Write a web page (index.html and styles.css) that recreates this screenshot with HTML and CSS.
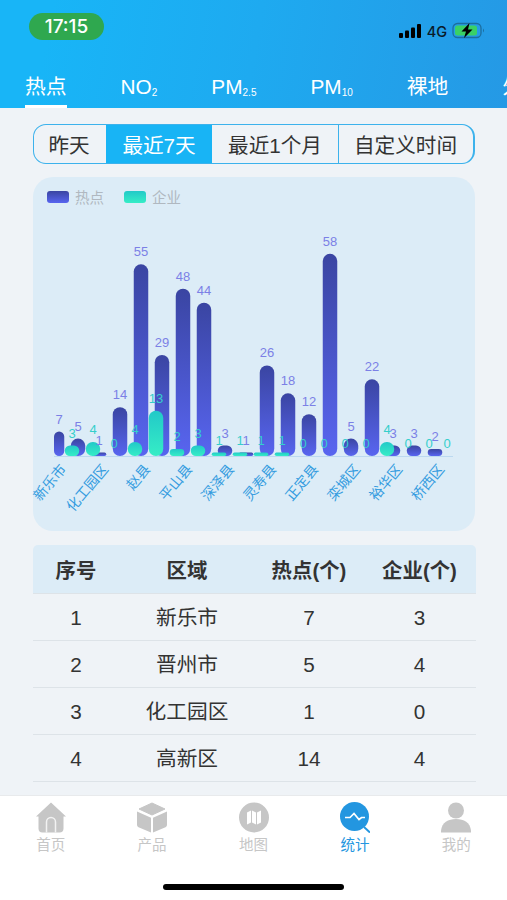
FILE: index.html
```html
<!DOCTYPE html>
<html lang="zh-CN">
<head>
    <meta charset="UTF-8">
    <meta name="viewport" content="width=device-width, initial-scale=1.0">
    <title>统计</title>
    <link rel="stylesheet" href="styles.css">
</head>
<body>
    <header class="header">
        <div class="status">
            <span class="time">17:15</span>
            <div class="status-right">
                <svg width="24" height="16" viewBox="0 0 24 16">
                    <rect x="1" y="10" width="4" height="5" rx="1"/>
                    <rect x="7" y="7.500" width="4" height="7.500" rx="1"/>
                    <rect x="13" y="4.500" width="4" height="10.500" rx="1"/>
                    <rect x="19" y="1" width="4" height="14" rx="1"/>
                </svg>
                <span class="net">4G</span>
                <svg width="34" height="18" viewBox="0 0 34 18">
                    <rect x="1" y="1.500" width="28" height="14" rx="4.500" fill="none" stroke="#1c6e9f" stroke-width="1.300"/>
                    <rect x="3" y="3.500" width="22" height="10" rx="2.500" fill="#3ad065"/>
                    <path d="M31 6.500v4q2-2 0-4z" fill="#1c6e9f"/>
                    <path d="M17.500 1L9.500 9.500h4.500L12 16l8.500-8.500H16z"/>
                </svg>
            </div>
        </div>
        <nav class="tabs">
            <a class="tab on">热点</a>
            <a class="tab">NO<small>2</small></a>
            <a class="tab">PM<small>2.5</small></a>
            <a class="tab">PM<small>10</small></a>
            <a class="tab">裸地</a>
            <a class="tab">外</a>
        </nav>
    </header>

    <main class="content">
        <div class="range">
            <span class="r1">昨天</span>
            <span class="r2 active">最近7天</span>
            <span class="r3">最近1个月</span>
            <span class="r4">自定义时间</span>
        </div>

        <div class="chart-box">
            <div class="legend">
                <i class="hot"></i><span>热点</span>
                <i class="firm"></i><span>企业</span>
            </div>
            <svg id="chart" width="442" height="318" viewBox="33 213 442 318">
                <defs>
                    <linearGradient id="blue" x1="0" y1="0" x2="0" y2="1">
                        <stop offset="0" stop-color="#3a45a2"/>
                        <stop offset="1" stop-color="#5865f0"/>
                    </linearGradient>
                    <linearGradient id="green" x1="0" y1="0" x2="0" y2="1">
                        <stop offset="0" stop-color="#22c9c8"/>
                        <stop offset="1" stop-color="#36edc6"/>
                    </linearGradient>
                </defs>
                <path d="M54 456.500H453" stroke="#bcd9f0"/>
                <g id="bars"></g>
                <g id="labels"></g>
            </svg>
        </div>

        <table class="list">
            <thead>
                <tr><th class="c1">序号</th><th class="c2">区域</th><th class="c3">热点(个)</th><th class="c4">企业(个)</th></tr>
            </thead>
            <tbody>
                <tr><td>1</td><td>新乐市</td><td>7</td><td>3</td></tr>
                <tr><td>2</td><td>晋州市</td><td>5</td><td>4</td></tr>
                <tr><td>3</td><td>化工园区</td><td>1</td><td>0</td></tr>
                <tr><td>4</td><td>高新区</td><td>14</td><td>4</td></tr>
            </tbody>
        </table>
    </main>

    <footer class="footer">
        <div class="menu">
            <a>
                <svg width="30" height="30" viewBox="0 0 30 30">
                    <path d="M15 0L0 14h2.500v12q0 4 4 4h17q4 0 4-4V14H30z"/>
                    <path d="M10.500 30V19.500a4.500 4.500 0 0 1 9 0V30" fill="none" stroke="#f2f2f2" stroke-width="1.500"/>
                </svg>
                <span>首页</span>
            </a>
            <a>
                <svg width="30" height="30" viewBox="0 0 30 30">
                    <path d="M15 0.500L28 6.500 15 12.500 2 6.500z" stroke="#c6c6c6" stroke-linejoin="round"/>
                    <path d="M0 9l14 6.200V30L1.500 24.800Q0 24 0 22.500zM30 9l-14 6.200V30l12.500-5.200Q30 24 30 22.500z"/>
                </svg>
                <span>产品</span>
            </a>
            <a>
                <svg width="30" height="30" viewBox="0 0 30 30">
                    <circle cx="15" cy="15" r="15"/>
                    <path d="M8 10l4-2v12l-4 2zM13 8l4 2v12l-4-2zM18 10l4-2v12l-4 2z" fill="#fff"/>
                </svg>
                <span>地图</span>
            </a>
            <a class="now">
                <svg width="30" height="31" viewBox="0 0 30 31">
                    <circle cx="14.500" cy="14.500" r="14.500"/>
                    <path d="M24 25l6 5.500" stroke="#2396e0" stroke-width="2"/>
                    <path d="M5 15.500h5l4-4 5 6 2.500-2H25" fill="none" stroke="#fff" stroke-width="1.700"/>
                </svg>
                <span>统计</span>
            </a>
            <a>
                <svg width="30" height="30" viewBox="0 0 30 30">
                    <circle cx="15" cy="8" r="8"/>
                    <path d="M0 30v-2C1 20 7 16.500 15 16.500S29 20 30 28v2z"/>
                </svg>
                <span>我的</span>
            </a>
        </div>
        <div class="home-bar"></div>
    </footer>

    <script src="chart.js"></script>
</body>
</html>
```

FILE: styles.css
```css
*{
    box-sizing: border-box;
}
body{
    margin: 0;
    height: 900px;
    display: flex;
    flex-direction: column;
    overflow: hidden;
    background-color: #fff;
    color: #333;
    font-family: "Liberation Sans", "Noto Sans CJK SC", sans-serif;
}
.header{
    height: 108px;
    flex: none;
    background: linear-gradient(100deg, #18b5f7 10%, #1eaaf0 50%, #2599e5);
    color: #fff;
}
.status{
    height: 66px;
    padding: 13px 21px 0 29px;
    display: flex;
    justify-content: space-between;
}
.time{
    width: 75px;
    height: 27px;
    border-radius: 14px;
    background-color: #2fa84f;
    font: 500 19px/28px Inter, sans-serif;
    text-align: center;
}
.status-right{
    display: flex;
    align-items: center;
    height: 36px;
    color: #0a1a28;
}
.net{
    margin: 1px 5px 0 5px;
    font: 500 14.500px Inter, sans-serif;
}
.tabs{
    display: flex;
    gap: 54px;
    height: 42px;
    padding-left: 25px;
    overflow: hidden;
    white-space: nowrap;
}
.tab{
    flex: none;
    font-size: 20.800px;
    line-height: 41px;
}
.tab small{
    font-size: 10px;
    position: relative;
    top: 2px;
}
.on{
    border-bottom: 3px solid #fff;
}
.content{
    height: 687px;
    flex: none;
    padding: 16px 31px 0 33px;
    background-color: #eff3f7;
    overflow: hidden;
}
.range{
    display: flex;
    width: 442px;
    height: 40px;
    border: 1.500px solid #3cb2ec;
    border-right-width: 2px;
    border-radius: 13px;
    overflow: hidden;
    font-size: 20.600px;
    line-height: 41px;
    text-align: center;
}
.r1{
    width: 72px;
    padding-right: 2px;
}
.r2{
    width: 106px;
}
.r3{
    width: 127px;
    border-right: 1.500px solid #3cb2ec;
}
.r4{
    flex: 1;
    padding-right: 1px;
}
.active{
    background-color: #18b4f5;
    color: #fff;
}
.chart-box{
    width: 442px;
    height: 354px;
    margin-top: 13px;
    border-radius: 20px;
    background-color: #dcecf7;
}
.chart-box svg{
    display: block;
    overflow: visible;
}
.legend{
    display: flex;
    align-items: center;
    height: 36px;
    padding: 3px 0 0 14px;
    font-size: 14.500px;
    color: #b0b8c0;
}
.legend i{
    width: 22px;
    height: 12px;
    margin-right: 6px;
    border-radius: 3px;
}
.legend span{
    width: 49px;
}
.hot{
    background: linear-gradient(#3a45a2, #5865f0);
}
.firm{
    background: linear-gradient(#22c9c8, #36edc6);
}
#labels{
    font-size: 13px;
}
.list{
    width: 443px;
    margin-top: 14px;
    border-collapse: separate;
    border-spacing: 0;
    table-layout: fixed;
    text-align: center;
    font-size: 20.700px;
}
.list th, .list td{
    height: 47px;
    padding: 2px 0 0;
    line-height: 30px;
    border-bottom: 1px solid #dde3e8;
}
.list th{
    height: 49px;
    padding-top: 4px;
    background-color: #dcecf7;
    font-size: 20.400px;
    font-weight: bold;
}
.c1{
    width: 86px;
    border-top-left-radius: 5px;
}
.c2{
    width: 136px;
}
.c3{
    width: 108px;
}
.c4{
    width: 113px;
    border-top-right-radius: 5px;
}
.footer{
    height: 105px;
    border-top: 1px solid #e8eaec;
    background-color: #fff;
}
.menu{
    display: flex;
    height: 88px;
    padding-top: 6px;
}
.menu a{
    flex: 1;
    display: flex;
    flex-direction: column;
    align-items: center;
    font-size: 14.500px;
    color: #c6c6c6;
    fill: #c6c6c6;
}
.menu svg{
    height: 31px;
}
.menu span{
    line-height: 25px;
}
.menu .now{
    color: #2396e0;
    fill: #2396e0;
}
.home-bar{
    width: 181px;
    height: 6px;
    margin-left: 163px;
    border-radius: 3px;
    background-color: #000;
}
```

FILE: chart.js
```javascript
var hot = [7,5,1,14,55,29,48,44,3,1,26,18,12,58,5,22,3,3,2];
var firm = [3,4,0,4,13,2,3,1,1,1,1,0,0,0,0,4,0,0,0];
var names = ["新乐市","化工园区","赵县","平山县","深泽县","灵寿县","正定县","栾城区","裕华区","桥西区"];

var bars = document.getElementById("bars");
var labels = document.getElementById("labels");
var base = 456;
var step = 21;
var unit = 3.485;

function add(parent, tag, attrs, text){
    var el = document.createElementNS("http://www.w3.org/2000/svg", tag);
    for(var key in attrs){
        el.setAttribute(key, attrs[key]);
    }
    if(text !== undefined){
        el.textContent = text;
    }
    parent.append(el);
}

function drawSeries(data, start, fill, color){
    data.forEach(function(n, i){
        var x = start + i * step;
        var h = n * unit;
        // keep the outer bars and labels inside the grid
        var left = Math.max(54, x - 7.25);
        var w = x + 7.25 - left;
        add(bars, "rect", {x: left, y: base - h, width: w, height: h, rx: Math.min(w / 2, h / 2), fill: "url(#" + fill + ")"});
        var lx = Math.max(59, Math.min(447, x));
        add(labels, "text", {x: lx, y: base - h - 8, fill: color, "text-anchor": "middle"}, n);
    });
}

drawSeries(hot, 57, "blue", "#7b80e6");
drawSeries(firm, 72, "green", "#35cfcb");

names.forEach(function(name, i){
    var x = 67 + i * step * 2;
    add(labels, "text", {transform: "translate(" + x + " 469.5) rotate(-50)", "text-anchor": "end", fill: "#359ce0", "font-size": 14}, name);
});
```
